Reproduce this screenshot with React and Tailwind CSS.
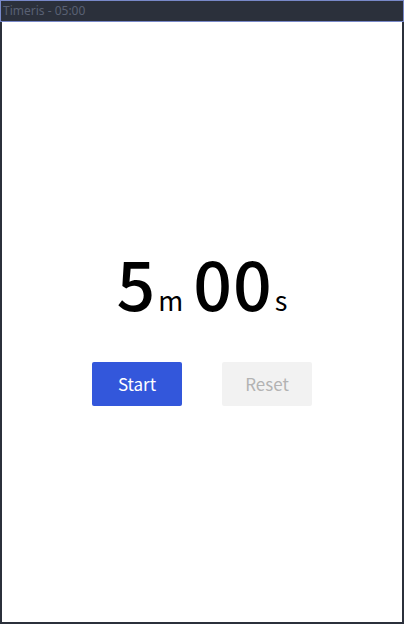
export default function App() {
  return (
    <div className="w-[404px] h-[624px] flex flex-col bg-[#2b303b]" style={{ fontFamily: '"Noto Sans CJK JP", "Noto Sans", sans-serif' }}>
      <div className="h-[22px] shrink-0 border border-[#7888c8] bg-[#2b303b] flex items-center px-[2px]">
        <span className="text-[12px] leading-none text-[#596073]" style={{ fontFamily: '"Noto Sans", sans-serif' }}>Timeris - 05:00</span>
      </div>
      <div className="flex-1 mx-[2px] mb-[2px] bg-white flex flex-col items-center justify-center pt-[10px]">
        <div className="flex items-baseline text-black leading-none">
          <span className="text-[68px] font-medium">5</span>
          <span className="text-[27px] ml-[3px]">m</span>
          <span className="text-[68px] font-medium tracking-[1px] ml-[10px]">00</span>
          <span className="text-[27px] ml-[2px]">s</span>
        </div>
        <div className="flex gap-[40px] mt-[46px]">
          <button className="w-[90px] h-[44px] rounded-[2px] bg-[#3357db] text-white text-[17px]">Start</button>
          <button className="w-[90px] h-[44px] rounded-[2px] bg-[#f2f2f2] text-[#b3b3b3] text-[17px]">Reset</button>
        </div>
      </div>
    </div>
  );
}
